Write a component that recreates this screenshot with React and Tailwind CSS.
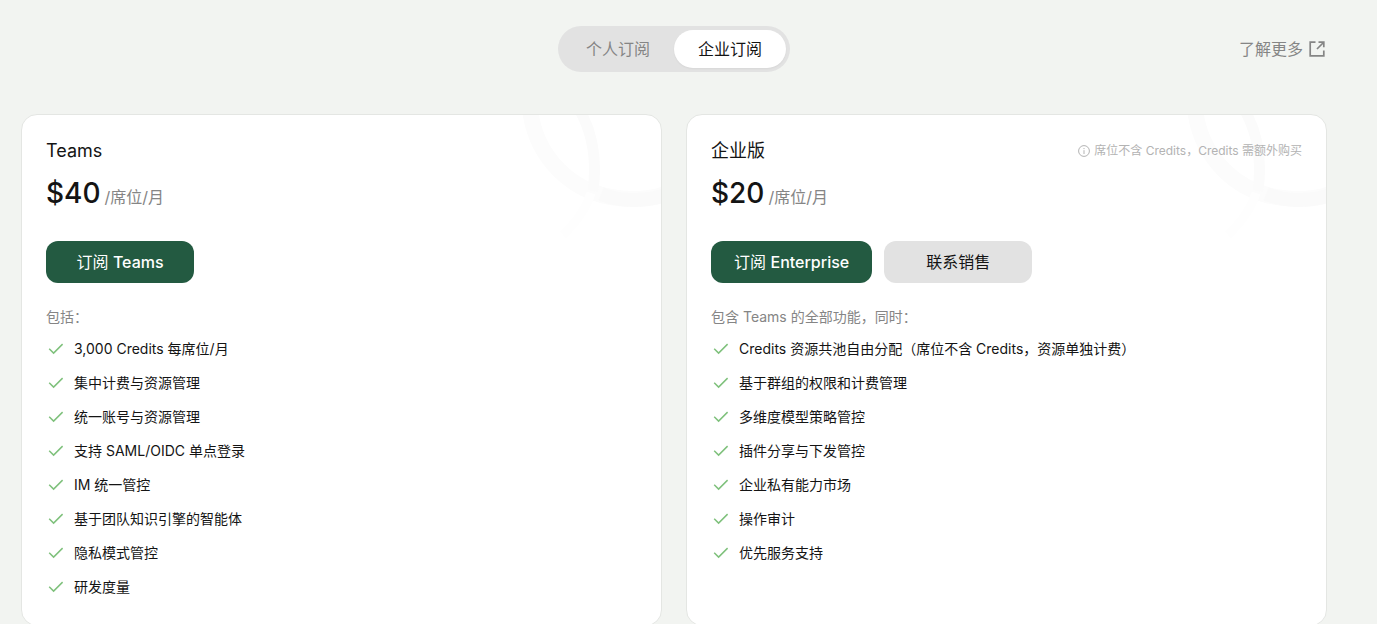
import React from "react";

function CheckIcon() {
  return (
    <svg viewBox="0 0 20 20" className="h-5 w-5 shrink-0" fill="none" stroke="#7fc17c" strokeWidth="1.5" aria-hidden="true">
      <path d="M3.2 9.8 L7.6 14.1 L16.6 5.1" />
    </svg>
  );
}

function ExternalIcon() {
  return (
    <svg viewBox="0 0 16 16" className="h-4 w-4" fill="none" stroke="currentColor" strokeWidth="1.7" aria-hidden="true">
      <path d="M6.5 1.2 H1.2 V14.8 H14.8 V9.5" />
      <path d="M9.5 1.2 H14.8 V6.2" />
      <path d="M14.5 1.5 L8 8" />
    </svg>
  );
}

function InfoIcon() {
  return (
    <svg viewBox="0 0 12 12" className="h-3 w-3" fill="none" stroke="currentColor" strokeWidth="1" aria-hidden="true">
      <circle cx="6" cy="6" r="5.4" />
      <path d="M6 5.2 V9 M6 3 V4.1" />
    </svg>
  );
}

function Rings() {
  return (
    <svg viewBox="0 0 140 130" className="pointer-events-none absolute top-0 right-0 h-[130px] w-[140px]" fill="none" aria-hidden="true">
      <path d="M9 -6 C14 38 48 84 112 84 C124 84 133 83 144 79" stroke="#fcfcfc" strokeWidth="16" />
      <path d="M80 79 C90 83 101 85 112 85 C124 85 133 84 144 80" stroke="#fafafa" strokeWidth="14" />
      <path d="M58 -6 C72 18 76 46 72 76" stroke="#fbfbfb" strokeWidth="11" />
      <path d="M70 78 C64 96 54 108 42 120" stroke="#fefefe" strokeWidth="9" />
    </svg>
  );
}

function PlanCard({ name, note, price, actions, label, features }) {
  return (
    <section className="relative overflow-hidden rounded-2xl border border-[#e4e6e3] bg-white px-6 pt-6 pb-7">
      <Rings />
      <div className="relative flex items-center justify-between">
        <h2 className="text-[18px] leading-6 text-[#141414]">{name}</h2>
        {note && (
          <p className="flex items-center gap-1 text-[12px] leading-5 text-[#b3b3b3]">
            <InfoIcon />
            {note}
          </p>
        )}
      </div>
      <p className="relative mt-3 flex items-baseline gap-1 leading-9">
        <span className="text-[28px] font-medium text-[#141414]">{price}</span>
        <span className="text-[16px] text-[#858585]">/席位/月</span>
      </p>
      <div className="mt-[26px] flex gap-3">{actions}</div>
      <p className="mt-6 text-[14px] leading-5 text-[#858585]">{label}</p>
      <ul className="mt-3 flex flex-col gap-3.5">
        {features.map((f) => (
          <li key={f} className="flex items-center gap-2 text-[14px] leading-5 text-[#141414]">
            <CheckIcon />
            {f}
          </li>
        ))}
      </ul>
    </section>
  );
}

const button = "h-[42px] min-w-[148px] rounded-xl px-[23px] text-[16px]";

function SubscribeButton({ plan }) {
  return (
    <button className={`${button} bg-[#235a41] text-white`}>
      订阅 <span className="font-medium">{plan}</span>
    </button>
  );
}

export default function App() {
  return (
    <main className="min-h-screen bg-[#f2f4f1] pt-[26px] pr-[50px] pl-[21px] font-['Inter','Noto_Sans_CJK_SC',sans-serif]">
      <header className="grid grid-cols-[1fr_auto_1fr] items-center">
        <div role="tablist" className="col-start-2 flex rounded-full bg-[#e2e2e2] p-1 text-[16px]">
          <button role="tab" aria-selected="false" className="h-[38px] rounded-full px-6 text-[#858585]">
            个人订阅
          </button>
          <button role="tab" aria-selected="true" className="h-[38px] rounded-full bg-white px-6 text-[#141414] shadow-xs">
            企业订阅
          </button>
        </div>
        <a href="#more" className="mr-0.5 flex items-center gap-1.5 justify-self-end text-[16px] text-[#858585]">
          了解更多
          <ExternalIcon />
        </a>
      </header>
      <div className="mt-[42px] grid grid-cols-2 gap-6">
        <PlanCard
          name="Teams"
          price="$40"
          label="包括："
          actions={<SubscribeButton plan="Teams" />}
          features={[
            "3,000 Credits 每席位/月",
            "集中计费与资源管理",
            "统一账号与资源管理",
            "支持 SAML/OIDC 单点登录",
            "IM 统一管控",
            "基于团队知识引擎的智能体",
            "隐私模式管控",
            "研发度量",
          ]}
        />
        <PlanCard
          name="企业版"
          note="席位不含 Credits，Credits 需额外购买"
          price="$20"
          label="包含 Teams 的全部功能，同时："
          actions={
            <>
              <SubscribeButton plan="Enterprise" />
              <button className={`${button} bg-[#e2e2e2] text-[#141414]`}>联系销售</button>
            </>
          }
          features={[
            "Credits 资源共池自由分配（席位不含 Credits，资源单独计费）",
            "基于群组的权限和计费管理",
            "多维度模型策略管控",
            "插件分享与下发管控",
            "企业私有能力市场",
            "操作审计",
            "优先服务支持",
          ]}
        />
      </div>
    </main>
  );
}
